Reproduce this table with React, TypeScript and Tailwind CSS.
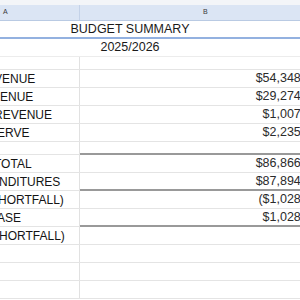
const font = { fontFamily: '"Liberation Sans", Arial, sans-serif' };

type Row = {
  label?: string;
  shift?: number;
  value?: string;
  negative?: boolean;
  thick?: boolean;
  h?: string;
};

const rows: Row[] = [
  { label: "VENUE", shift: -6, value: "$54,348" },
  { label: "ENUE", shift: 0, value: "$29,274" },
  { label: "REVENUE", shift: -6, value: "$1,007" },
  { label: "ERVE", shift: -3, value: "$2,235" },
  { h: "h-[13px]", thick: true },
  { label: "TOTAL", shift: -6, value: "$86,866" },
  { label: "NDITURES", shift: -1, value: "$87,894", thick: true },
  { label: "HORTFALL)", shift: -2, value: "($1,028", negative: true },
  { label: "ASE", shift: -3, value: "$1,028", thick: true },
  { label: "HORTFALL)", shift: -1 },
  {},
  {},
  {},
];

function DataRow({ row }: { row: Row }) {
  return (
    <div className={`flex ${row.h ?? "h-[18px]"} border-b border-[#e4e4e4]`}>
      <div className="w-[80px] shrink-0 border-r border-[#e1e1e1] overflow-hidden flex items-center">
        {row.label && (
          <span
            className="whitespace-nowrap text-[12px] text-[#141414]"
            style={{ marginLeft: row.shift }}
          >
            {row.label}
          </span>
        )}
      </div>
      <div
        className={`w-[228px] shrink-0 flex items-center justify-end pr-[3px] text-[12.5px] text-[#2b2b2b] ${
          row.thick ? "border-b-2 border-[#999999] -mb-px" : ""
        }`}
      >
        {row.value && (
          <span className="whitespace-nowrap">
            {row.value}
            {row.negative ? ")" : <span className="invisible">)</span>}
          </span>
        )}
      </div>
    </div>
  );
}

export default function App() {
  return (
    <div className="w-[300px] h-[300px] overflow-hidden bg-white" style={font}>
      <div className="w-[308px]">
        <div className="h-[5px] bg-[#f3f5f8]" />
        <div className="flex h-[16px] bg-[#dbe5f4] border-b border-[#b9cae3]">
          <div className="w-[80px] border-r border-[#c4d2e8] flex items-center pl-[3px] text-[7px] text-[#3a3a3a]">
            A
          </div>
          <div className="flex-1 flex items-center pl-[123px] text-[7px] text-[#3a3a3a]">B</div>
        </div>
        <div className="flex h-[18px] items-center border-b-2 border-[#93b1e0]">
          <div className="w-[260px] text-center text-[12.5px] text-[#1a1a1a]">BUDGET SUMMARY</div>
        </div>
        <div className="flex h-[18px] items-center border-b border-[#ececec]">
          <div className="w-[260px] text-center text-[12.5px] text-[#1a1a1a]">2025/2026</div>
        </div>
        <div className="flex h-[13px] border-b border-[#e4e4e4]">
          <div className="w-[80px] border-r border-[#e1e1e1]" />
        </div>
        {rows.map((r, i) => (
          <DataRow key={i} row={r} />
        ))}
      </div>
    </div>
  );
}
